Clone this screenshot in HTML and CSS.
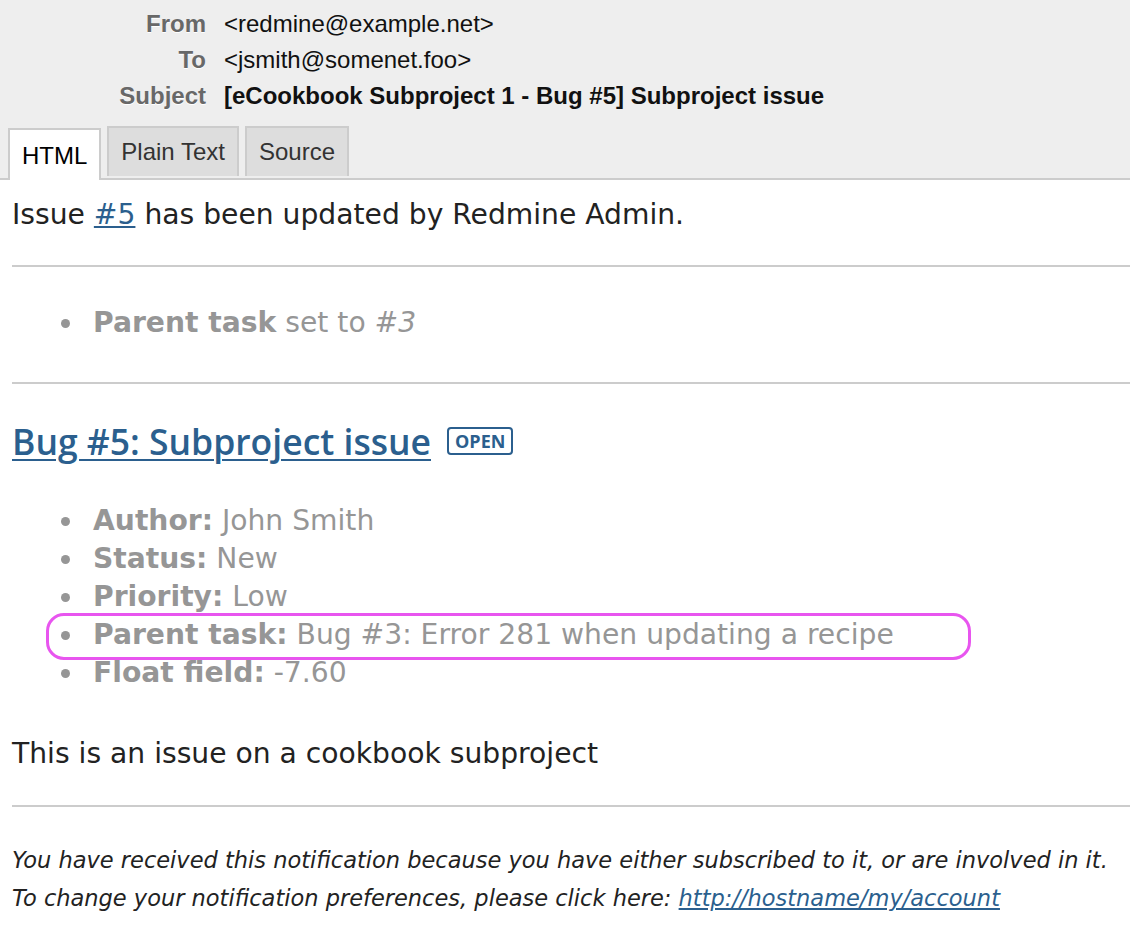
FILE: index.html
```html
<!DOCTYPE html>
<html>
<head>
<meta charset="utf-8">
<link rel="stylesheet" href="styles.css">
</head>
<body>
<div class="headers">
  <div class="hrow"><span class="hlabel">From</span><span class="hvalue">&lt;redmine@example.net&gt;</span></div>
  <div class="hrow"><span class="hlabel">To</span><span class="hvalue">&lt;jsmith@somenet.foo&gt;</span></div>
  <div class="hrow"><span class="hlabel">Subject</span><span class="hvalue subject">[eCookbook Subproject 1 - Bug #5] Subproject issue</span></div>
  <div class="tabs">
    <span class="tab active">HTML</span>
    <span class="tab">Plain Text</span>
    <span class="tab">Source</span>
  </div>
</div>
<div class="mail">
  <p class="intro">Issue <a href="#">#5</a> has been updated by Redmine Admin.</p>
  <hr>
  <ul class="details">
    <li><strong>Parent task</strong> set to <i>#3</i></li>
  </ul>
  <hr>
  <h1 class="title"><a href="#">Bug #5: Subproject issue</a><span class="badge">OPEN</span></h1>
  <ul class="details attrs">
    <li><strong>Author:</strong> John Smith</li>
    <li><strong>Status:</strong> New</li>
    <li><strong>Priority:</strong> Low</li>
    <li class="marked"><strong>Parent task:</strong> Bug #3: Error 281 when updating a recipe<span class="highlight"></span></li>
    <li><strong>Float field:</strong> -7.60</li>
  </ul>
  <p class="desc">This is an issue on a cookbook subproject</p>
  <hr>
  <p class="footer">You have received this notification because you have either subscribed to it, or are involved in it.<br>To change your notification preferences, please click here: <a href="#">http://hostname/my/account</a></p>
</div>
</body>
</html>
```
FILE: styles.css
```css
html, body { margin: 0; padding: 0; background: #fff; }
body { font-family: "DejaVu Sans", Verdana, sans-serif; color: #222; width: 1130px; overflow: hidden; }

.headers {
  background: #eee;
  border-bottom: 2px solid #ccc;
  padding-top: 6px;
  font-family: "Liberation Sans", Arial, sans-serif;
  font-size: 24px;
}
.hrow { display: flex; height: 36px; align-items: center; }
.hlabel {
  width: 206px;
  text-align: right;
  font-weight: bold;
  color: #686868;
  text-shadow: 0 1px 0 #fff;
}
.hvalue { margin-left: 18px; color: #111; }
.subject { font-weight: bold; }

.tabs { display: flex; gap: 6px; padding: 12px 0 0 8px; margin-bottom: -2px; align-items: flex-start; }
.tab {
  display: block;
  height: 48px;
  line-height: 48px;
  padding: 0 12px;
  background: #ddd;
  border: 2px solid #ccc;
  border-bottom: none;
  color: #333;
  font-size: 24px;
}
.tab.active {
  background: #fff;
  color: #000;
  height: 50px;
  line-height: 52px;
  margin-top: 2px;
}

.mail { padding: 0 0 0 12px; font-size: 28.2px; }
p { line-height: 32px; }
.intro { margin: 19px 0 34px; }
a { color: #2b5f8e; }
hr { border: 0; border-top: 2px solid #ccc; margin: 0; }

.details { color: #969696; margin: 37px 0 40px; padding-left: 81px; list-style: none; }
.details li { position: relative; line-height: 38px; }
.details li::before {
  content: "";
  position: absolute;
  left: -32px;
  top: 15px;
  width: 9px;
  height: 9px;
  border-radius: 50%;
  background: #969696;
}
.details strong { font-weight: bold; }

.title {
  margin: 35px 0 0;
  font-family: "Open Sans", "Noto Sans", sans-serif;
  font-size: 35.5px;
  font-weight: 600;
  line-height: 44px;
  display: flex;
  align-items: center;
}
.title a { color: #2b5f8e; text-underline-offset: 4px; text-decoration-thickness: 2px; }
.badge {
  margin-left: 16px;
  font-family: "Open Sans", sans-serif;
  font-size: 18px;
  font-weight: bold;
  color: #2b5f8e;
  border: 2px solid #2b5f8e;
  border-radius: 4px;
  padding: 0 6px;
  line-height: 24px;
}
.attrs { margin: 39px 0 46px; }
.marked { position: relative; }
.highlight {
  position: absolute;
  left: -47px;
  top: -3px;
  width: 925px;
  height: 47px;
  box-sizing: border-box;
  border: 3px solid #e855ef;
  border-radius: 18px;
}
.desc { margin: 0 0 35px; }
.footer { margin: 34px 0 0; font-size: 22.5px; font-style: italic; line-height: 38px; }
```
